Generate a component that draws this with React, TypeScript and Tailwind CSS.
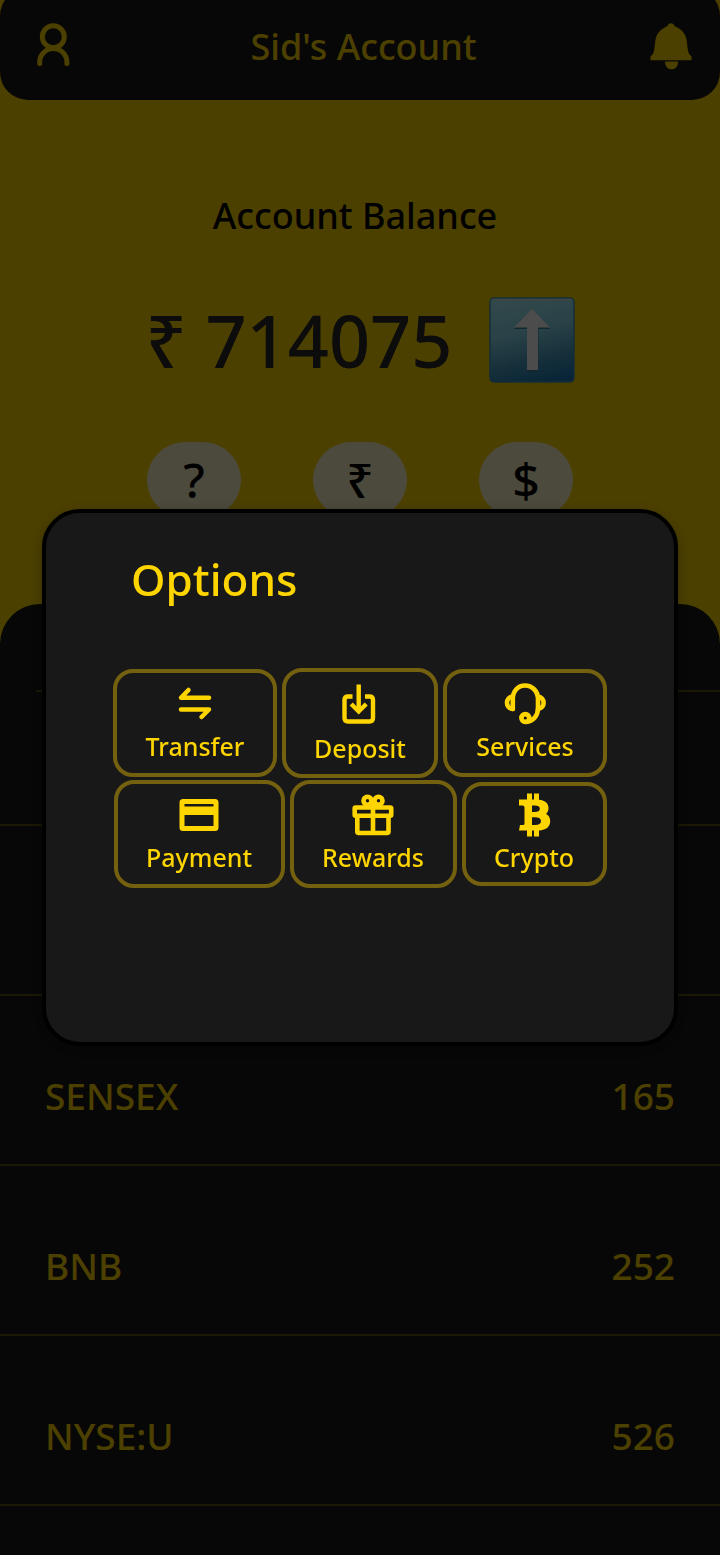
import type { ReactNode } from 'react';

const stroke = {
  fill: 'none',
  stroke: 'currentColor',
  strokeLinecap: 'round' as const,
  strokeLinejoin: 'round' as const,
};

function UserIcon() {
  return (
    <svg viewBox="0 0 40 48" className="h-12 w-10" {...stroke} strokeWidth="5" aria-hidden="true">
      <circle cx="20.300" cy="13.800" r="11" />
      <path d="M6.700 40.500V39a13.600 13.500 0 0 1 27.200 0V40.500" />
    </svg>
  );
}

function BellIcon() {
  return (
    <svg viewBox="0 0 42 48" className="h-12 w-[42px]" fill="currentColor" aria-hidden="true">
      <path d="M17.500 3C18 1 19.400.2 21 .2s3 .8 3.500 2.800C32.500 6.500 36 11.500 36.800 18c.8 6.500 1 11 2.600 13.500L41.500 33.200V37.200H.5V33.200L2.700 31.500c1.600-2.500 1.800-7 2.600-13.500C6 11.500 9.500 6.500 17.500 3Z" />
      <path d="M15 38.500h13v1.300a6.500 6.500 0 0 1-13 0Z" />
    </svg>
  );
}

function UpArrowTile() {
  return (
    <svg viewBox="0 0 86 86" className="size-[86px]" role="img" aria-label="Up">
      <defs>
        <linearGradient id="tile" x1="0.35" y1="0" x2="0.6" y2="1">
          <stop offset="0" stopColor="#a8f0f8" />
          <stop offset="0.4" stopColor="#8adcf0" />
          <stop offset="0.75" stopColor="#4a9fc4" />
          <stop offset="1" stopColor="#207db8" />
        </linearGradient>
      </defs>
      <rect x="1" y="1" width="84" height="84" rx="4" fill="url(#tile)" stroke="#3f98b8" strokeWidth="1.500" />
      <path d="M4 2.500H82" stroke="#d8e8ee" strokeWidth="1.500" />
      <path d="M43 13 61.500 32H49.500V75H38V32H24.500Z" fill="#3a88a5" />
      <path d="M43 12 61 30.500H49V73H38V30.500H25Z" fill="#fff" />
    </svg>
  );
}

function TransferIcon() {
  return (
    <svg viewBox="0 0 40 40" className="size-10" {...stroke} strokeWidth="4.500" aria-hidden="true">
      <path d="M13.500 6 6 13.700H34" />
      <path d="M6 25.500H34L26.500 33" />
    </svg>
  );
}

function DepositIcon() {
  return (
    <svg viewBox="0 0 40 44" className="h-11 w-10" {...stroke} strokeWidth="4.400" aria-hidden="true">
      <path d="M12.500 14.500H8Q4.500 14.500 4.500 18V36Q4.500 39.500 8 39.500H29.500Q33 39.500 33 36V18Q33 14.500 29.500 14.500H25" strokeLinecap="butt" />
      <path d="M18.700 2.500V29" strokeLinecap="butt" />
      <path d="M11.200 22 18.700 29.500 26.200 22" strokeLinecap="butt" strokeLinejoin="miter" />
    </svg>
  );
}

function ServicesIcon() {
  return (
    <svg viewBox="0 0 44 44" className="size-11" {...stroke} strokeWidth="4.600" aria-hidden="true">
      <path d="M9.800 27V17C9.800 9 15 3.500 22 3.500S35 9 35 17V26C35 34 30 39.500 23 40" />
      <path d="M9.800 27C2 26 2 15.500 9.800 14.500" />
      <path d="M35 27C42.500 26 42.500 15.500 35 14.500" />
      <circle cx="22.300" cy="36" r="3.900" />
    </svg>
  );
}

function PaymentIcon() {
  return (
    <svg viewBox="0 0 40 40" className="size-10" aria-hidden="true">
      <path
        fill="currentColor"
        fillRule="evenodd"
        d="M4 4H36Q39.500 4 39.500 7.500V32.500Q39.500 36 36 36H4Q.5 36 .5 32.500V7.500Q.5 4 4 4ZM5.500 9V11.500H34.500V9ZM5.500 20V31H34.500V20Z"
      />
    </svg>
  );
}

function RewardsIcon() {
  return (
    <svg viewBox="0 0 44 44" className="size-11" {...stroke} strokeWidth="4.600" aria-hidden="true">
      <rect x="3.700" y="14.500" width="36.500" height="8.300" rx="1" />
      <path d="M6.300 24V38.500Q6.300 40 7.800 40H36Q37.500 40 37.500 38.500V24M22 15V39" />
      <circle cx="16.500" cy="7.800" r="4" />
      <circle cx="27.500" cy="7.800" r="4" />
      <path d="M19 11 22 14.500 25 11" />
    </svg>
  );
}

function CryptoIcon() {
  return (
    <svg viewBox="0 0 40 44" className="h-11 w-10" aria-hidden="true">
      <path
        fill="currentColor"
        fillRule="evenodd"
        d="M13 .5H18V6.500H20V.5H25V6.700C31.500 7.300 34.500 10.500 34.500 15 34.500 17.500 33.700 19.500 32 20.700 34.800 22.300 36.200 25 36.200 28 36.200 33.500 32.500 37 25 37.500V43.500H20V37.500H18V43.500H13V37.500H5L6 32H9Q10.500 32 10.500 30.500V14.500Q10.500 12.500 8.500 12.500H5V6.500H13ZM18 12.500V19H20.500C24 19 25.800 17.900 25.800 15.700S24 12.500 20.500 12.500ZM18 24.200V32H21C25 32 27 30.600 27 28.100S25 24.200 21 24.200Z"
      />
    </svg>
  );
}

function Option({ label, size, iconBox = 'h-11', children }: { label: string; size: string; iconBox?: string; children: ReactNode }) {
  return (
    <button type="button" className={`flex flex-col items-center justify-center gap-0.5 rounded-[20px] border-4 border-[#74610f] ${size}`}>
      <span className={`flex items-center justify-center ${iconBox}`}>{children}</span>
      <span className="text-[25px] leading-9">{label}</span>
    </button>
  );
}

const markets = [
  { name: 'SENSEX', value: 165 },
  { name: 'BNB', value: 252 },
  { name: 'NYSE:U', value: 526 },
];

export default function App() {
  return (
    <div className="min-h-screen overflow-hidden bg-[#ffd500] font-['Noto_Sans',sans-serif] font-medium">
      <header className="-mt-3 flex h-28 items-center justify-between rounded-[28px] bg-[#181818] pt-1.5 pr-7 pl-[33px] text-[#ffd500]">
        <button type="button" aria-label="Profile">
          <UserIcon />
        </button>
        <h1 className="pl-1 text-[36px] leading-12">Sid's Account</h1>
        <button type="button" aria-label="Notifications">
          <BellIcon />
        </button>
      </header>

      <main>
        <section className="flex h-[504px] flex-col items-center pt-[92px]">
          <h2 className="pr-2.5 text-[36px] leading-12">Account Balance</h2>
          <div className="mt-[57px] flex items-center gap-9 text-[#282828]">
            <p className="text-[72px] leading-[86px]">₹ 714075</p>
            <UpArrowTile />
          </div>
          <div className="mt-[59px] flex gap-[72px]">
            {['?', '₹', '$'].map((sign) => (
              <button key={sign} type="button" className="h-[76px] w-[94px] rounded-[38px] bg-[#fff7cc] text-[48px] leading-none">
                {sign}
              </button>
            ))}
          </div>
        </section>

        <section className="min-h-[951px] rounded-t-[40px] bg-[#181818] text-[#ffd500]">
          <div className="ml-9 h-[88px] border-b-2 border-[#ffd500]/30" />
          <div className="h-[134px] border-b-2 border-[#ffd500]/30" />
          <div className="h-[170px] border-b-2 border-[#ffd500]/30" />
          <ul>
            {markets.map((m) => (
              <li key={m.name} className="flex h-[170px] items-center justify-between border-b-2 border-[#ffd500]/30 px-[45px] pt-8 text-[37px] leading-12">
                <span>{m.name}</span>
                <span>{m.value}</span>
              </li>
            ))}
          </ul>
        </section>
      </main>

      <div className="fixed inset-0 flex items-center bg-black/70 px-[42px]">
        <div
          role="dialog"
          aria-labelledby="options-title"
          className="w-full rounded-[38px] border-4 border-black bg-[#181818] pt-9 pb-[154px] text-[#ffd500] shadow-[0_4px_16px_rgba(0,0,0,0.3)]"
        >
          <h2 id="options-title" className="pl-[85px] text-[44px] leading-[60px]">
            Options
          </h2>
          <div className="mt-[59px] flex flex-col items-center gap-0.5">
            <div className="flex items-center gap-[5px]">
              <Option label="Transfer" size="h-[108px] w-[164px]">
                <TransferIcon />
              </Option>
              <Option label="Deposit" size="h-[110px] w-[156px]" iconBox="h-12">
                <DepositIcon />
              </Option>
              <Option label="Services" size="h-[108px] w-[164px]">
                <ServicesIcon />
              </Option>
            </div>
            <div className="flex items-center gap-[5px]">
              <Option label="Payment" size="h-[108px] w-[171px]">
                <PaymentIcon />
              </Option>
              <Option label="Rewards" size="h-[108px] w-[167px]">
                <RewardsIcon />
              </Option>
              <Option label="Crypto" size="h-[104px] w-[145px]">
                <CryptoIcon />
              </Option>
            </div>
          </div>
        </div>
      </div>
    </div>
  );
}
